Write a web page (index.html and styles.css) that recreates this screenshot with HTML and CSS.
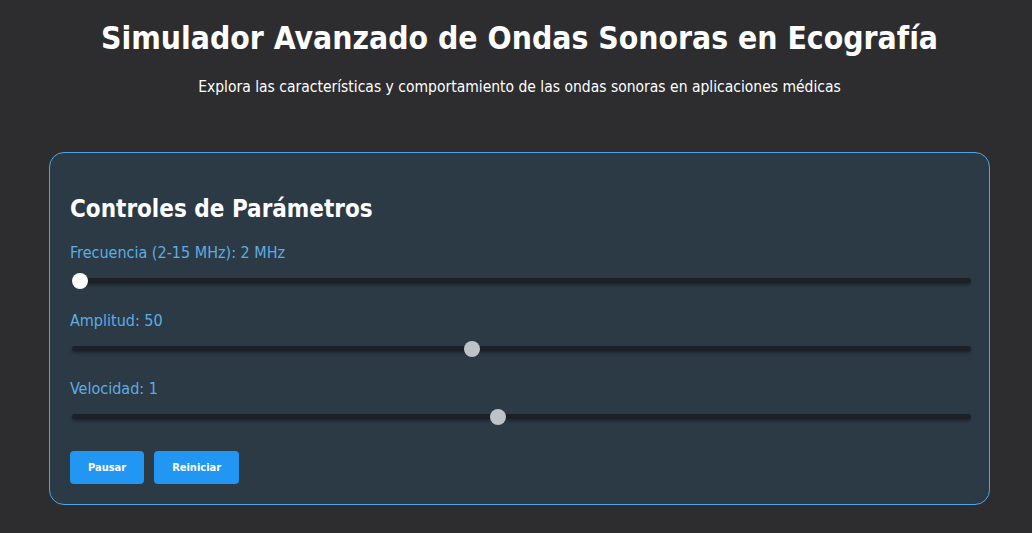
FILE: index.html
```html
<!DOCTYPE html>
<html lang="es">
	<head>
		<meta charset="UTF-8">
		<meta name="viewport" content="width=device-width, initial-scale=1.0">
		<title>Simulador de Ondas Sonoras</title>
		<link rel="stylesheet" href="styles.css">
	</head>
	<body>

		<div class="header">
			<h1>Simulador Avanzado de Ondas Sonoras en Ecografía</h1>
			<p class="subtitle">Explora las características y comportamiento de las ondas sonoras en aplicaciones médicas</p>
		</div>

		<div class="controls">
			<h2>Controles de Parámetros</h2>

			<div class="control-group">
				<label for="frequency">Frecuencia (2-15 MHz): <span id="freqValue">2</span> MHz</label>
				<input type="range" id="frequency" class="first" min="2" max="15" step="0.5" value="2">
			</div>

			<div class="control-group">
				<label for="amplitude">Amplitud: <span id="ampValue">50</span></label>
				<input type="range" id="amplitude" min="10" max="100" value="50">
			</div>

			<div class="control-group">
				<label for="speed">Velocidad: <span id="speedValue">1</span></label>
				<input type="range" id="speed" min="0.1" max="2" step="0.1" value="1">
			</div>

			<div class="buttons">
				<button class="button" id="pauseBtn">Pausar</button>
				<button class="button" id="resetBtn">Reiniciar</button>
			</div>
		</div>

	</body>
</html>
```

FILE: styles.css
```css
body {
	font-family: "DejaVu Sans Condensed", "DejaVu Sans", sans-serif;
	margin: 0;
	padding: 20px 42px 20px 49px;
	background-color: #2d2d2f;
	color: white;
}
.header {
	text-align: center;
}
h1 {
	font-size: 31.6px;
	font-weight: bold;
	margin: 0;
	line-height: 36px;
}
.subtitle {
	font-size: 15.5px;
	margin: 22px 0 0 0;
}
.controls {
	margin-top: 56px;
	background-color: #2c3a46;
	border: 1px solid #4ea6e6;
	border-radius: 15px;
	padding: 20px;
}
h2 {
	font-size: 24px;
	margin: 22px 0 20px 0;
}
.control-group {
	margin-bottom: 24px;
}
label {
	display: block;
	color: #5dade2;
	font-size: 16px;
	margin-bottom: 6px;
}
input[type="range"] {
	-webkit-appearance: none;
	appearance: none;
	width: 100%;
	height: 5px;
	margin: 2px;
	background: #1c2127;
	border-radius: 3px;
	box-shadow: 0 2px 3px rgba(0, 0, 0, 0.35);
	outline: none;
}
input[type="range"]::-webkit-slider-thumb {
	-webkit-appearance: none;
	appearance: none;
	width: 16px;
	height: 16px;
	border-radius: 50%;
	background: #bdc3c7;
	cursor: pointer;
}
input[type="range"].first::-webkit-slider-thumb {
	background: #ffffff;
}
.buttons {
	margin-top: 28px;
	display: flex;
	gap: 10px;
}
.button {
	font-family: "DejaVu Sans Condensed", "DejaVu Sans", sans-serif;
	background-color: #2196f3;
	color: white;
	border: none;
	border-radius: 4px;
	padding: 0 18px;
	height: 33px;
	font-size: 11px;
	font-weight: bold;
}
```
